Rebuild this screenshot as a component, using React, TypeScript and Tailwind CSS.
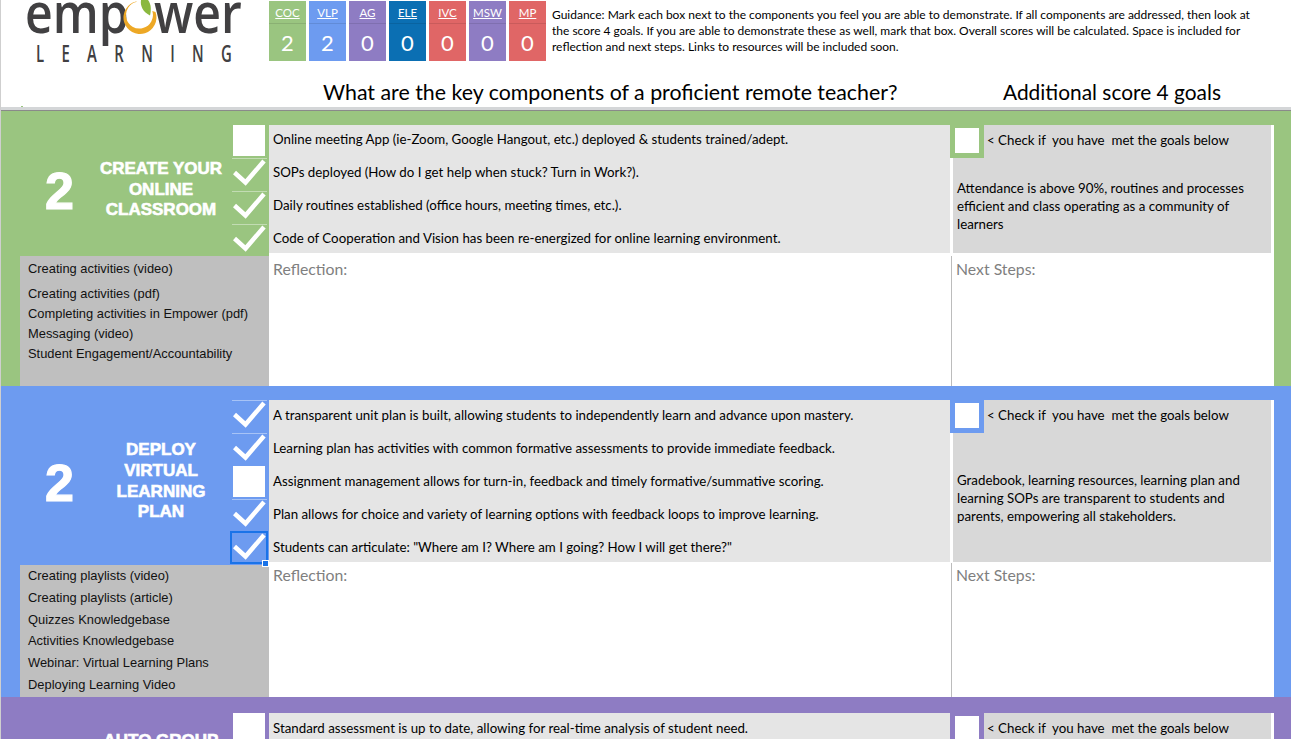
const calibri = "font-['Lato','Open_Sans',sans-serif]"
const arial = "font-['Liberation_Sans',Arial,sans-serif]"

const scores = [
  { label: "COC", value: "2", color: "bg-[#9ac580]" },
  { label: "VLP", value: "2", color: "bg-[#6d9bf0]" },
  { label: "AG", value: "0", color: "bg-[#8e7cc3]" },
  { label: "ELE", value: "0", color: "bg-[#0b6fb3]" },
  { label: "IVC", value: "0", color: "bg-[#e06666]" },
  { label: "MSW", value: "0", color: "bg-[#8e7cc3]" },
  { label: "MP", value: "0", color: "bg-[#e06666]" },
]

interface Item {
  text: string
  checked: boolean
}

interface SectionProps {
  color: string
  titleLines: string[]
  score?: string
  items: Item[]
  goal?: string
  links?: string[]
  linkClass?: string
  linkRowClass?: string
  topPad: string
  topHeight: string
  lowerHeight: string
  reflectPad: string
  nextClass: string
  textOffset: string
  titleClass?: string
  selected?: number
}

function Logo() {
  return (
    <div className="w-[268px] shrink-0 h-[107px] relative overflow-hidden">
      <span className="absolute left-[24px] top-[-25px] origin-left scale-x-[0.86] font-['Open_Sans',sans-serif] font-semibold text-[56px] leading-[72px] text-[#414042]">emp</span>
      <svg className="absolute left-[121px] top-0" width="38" height="40" viewBox="0 0 38 40">
        <path d="M14 1.5 A16.5 16.5 0 1 0 33.5 12 L30.3 11 A13.5 13.5 0 1 1 15 1.8 Z" fill="#eda825" />
        <path d="M19 0 C18 6 21 12 28 15.5 C29.5 9 29 4 26 0 Z" fill="#8ab83f" />
      </svg>
      <span className="absolute left-[153px] top-[-25px] origin-left scale-x-[0.86] font-['Open_Sans',sans-serif] font-semibold text-[56px] leading-[72px] text-[#414042]">wer</span>
      <div className="absolute left-[35px] top-[41px] origin-left scale-x-[0.62] font-['Open_Sans',sans-serif] font-semibold text-[24px] leading-[24px] text-[#414042] tracking-[28px] whitespace-nowrap">LEARNING</div>
      <div className="absolute left-[20px] bottom-0 w-[2px] h-[1px] bg-[#9ac580]" />
    </div>
  )
}

function Check() {
  return (
    <svg width="33" height="30" viewBox="0 0 33 30">
      <path d="M1.5 13.5 L12.5 23.5 L31 2" fill="none" stroke="white" strokeWidth="4.5" />
    </svg>
  )
}

function Section({
  color,
  titleLines,
  score,
  items,
  goal,
  links,
  linkClass,
  linkRowClass,
  topPad,
  topHeight,
  lowerHeight,
  reflectPad,
  nextClass,
  textOffset,
  titleClass,
  selected,
}: SectionProps) {
  return (
    <section className={`flex ${color} ${topPad}`}>
      <div className="w-[268px] shrink-0 flex flex-col">
        <div className="flex">
          <div className={`w-[231px] shrink-0 flex text-white ${titleClass ?? "items-center"}`}>
            <div className={`w-[95px] shrink-0 pl-[44px] text-[52px] leading-[52px] font-bold ${arial} [-webkit-text-stroke:1.2px_white]`}>{score}</div>
            <div className={`w-[130px] -mt-[2px] text-center text-[17px] leading-[20.7px] font-bold ${arial} [-webkit-text-stroke:0.6px_white]`}>
              {titleLines.map((l) => (
                <div key={l}>{l}</div>
              ))}
            </div>
          </div>
          <div className="w-[37px]">
            {items.map((item, i) => (
              <div
                key={item.text}
                className={`relative h-[33px] pl-[1px] ${item.checked ? "border-t border-white/40 mr-[2px]" : ""}`}
              >
                {item.checked ? <Check /> : <div className="w-[32px] h-[31px] bg-white" />}
                {selected === i && (
                  <div className="absolute left-[-2px] top-[-2px] w-[38px] h-[33px] border-2 border-[#1a73e8]">
                    <div className="absolute right-[-3px] bottom-[-5px] w-[7px] h-[7px] bg-[#1a73e8] border border-white" />
                  </div>
                )}
              </div>
            ))}
          </div>
        </div>
        {links && (
          <div className={`ml-[19px] bg-[#bfbfbf] grow text-[12.9px] leading-[18px] text-[#111] pl-[8px] ${arial} ${linkClass}`}>
            {links.map((l, i) => (
              <div key={l} className={linkRowClass ?? (i === 0 ? "h-[25px]" : "h-[20px]")}>
                {l}
              </div>
            ))}
          </div>
        )}
      </div>

      <div className="w-[1005px] shrink-0 flex flex-col bg-white">
        <div className={`flex ${topHeight}`}>
          <div className={`w-[681px] shrink-0 bg-[#e5e5e5] text-[13.3px] text-black ${calibri}`}>
            <div className={textOffset}>
              {items.map((item) => (
                <div key={item.text} className="h-[33px] pl-[4px] flex items-center whitespace-nowrap">
                  {item.text}
                </div>
              ))}
            </div>
          </div>
          <div className="w-[3px] shrink-0" />
          <div className={`w-[318px] shrink-0 bg-[#d8d8d8] flex flex-col text-[13.3px] text-black ${calibri}`}>
            <div className="flex items-start">
              <div className={`-ml-[3px] w-[34px] h-[33px] shrink-0 ${color} flex pl-[5px] pt-[3px]`}>
                <div className="w-[24px] h-[25px] bg-white" />
              </div>
              <div className="pl-[3px] h-[31px] flex items-center whitespace-pre">{"< Check if  you have  met the goals below"}</div>
            </div>
            <div className="grow flex items-center px-[4px] pt-[1px] leading-[18px]">{goal}</div>
          </div>
          <div className="w-[3px] shrink-0" />
        </div>
        <div className={`flex text-[15.8px] text-[#7f7f7f] ${calibri} ${lowerHeight}`}>
          <div className={`w-[682px] shrink-0 pl-[4px] ${reflectPad}`}>Reflection:</div>
          <div className={`grow border-l border-[#bcbcbc] pl-[4px] ${nextClass}`}>Next Steps:</div>
        </div>
      </div>
      <div className="grow" />
    </section>
  )
}

export default function App() {
  return (
    <div className="h-[739px] w-[1291px] overflow-hidden bg-white border-l border-[#cfcfcf]">
      <header className="flex h-[107px]">
        <Logo />
        <div className="flex flex-col grow">
          <div className="flex">
            <div className="flex gap-[3px] pt-[1px]">
              {scores.map((s) => (
                <div key={s.label} className={`w-[37px] h-[60px] ${s.color} text-white text-center ${calibri}`}>
                  <div className="h-[23px] border-b border-black/10 text-[11.5px] leading-[24px] underline">{s.label}</div>
                  <div className="text-[22px] leading-[37px]">{s.value}</div>
                </div>
              ))}
            </div>
            <p className={`ml-[6px] mt-[7px] w-[704px] text-[12px] leading-[16px] text-black ${calibri}`}>
              Guidance: Mark each box next to the components you feel you are able to demonstrate. If all components are addressed, then look at the score 4 goals. If you are able to demonstrate these as well, mark that box. Overall scores will be calculated. Space is included for reflection and next steps. Links to resources will be included soon.
            </p>
          </div>
          <div className={`flex mt-[17px] leading-[28px] text-black whitespace-nowrap ${calibri}`}>
            <div className="ml-[54px] w-[680px] shrink-0 text-[21.35px]">What are the key components of a proficient remote teacher?</div>
            <div className="text-[20.9px]">Additional score 4 goals</div>
          </div>
        </div>
      </header>
      <div className="h-[4px] bg-[#d4d6d8] border-b border-[#8a8a8a]" />
      <Section
        color="bg-[#9ac580]"
        topPad="pt-[14px]"
        topHeight="h-[128px]"
        lowerHeight="h-[133px]"
        reflectPad="pt-[4px]"
        nextClass="mt-[3px] pt-[1px]"
        textOffset="-mt-[2px]"
        titleLines={["CREATE YOUR", "ONLINE", "CLASSROOM"]}
        score="2"
        items={[
          { text: "Online meeting App (ie-Zoom, Google Hangout, etc.) deployed & students trained/adept.", checked: false },
          { text: "SOPs deployed (How do I get help when stuck? Turn in Work?).", checked: true },
          { text: "Daily routines established (office hours, meeting times, etc.).", checked: true },
          { text: "Code of Cooperation and Vision has been re-energized for online learning environment.", checked: true },
        ]}
        goal="Attendance is above 90%, routines and processes efficient and class operating as a community of learners"
        links={["Creating activities (video)", "Creating activities (pdf)", "Completing activities in Empower (pdf)", "Messaging (video)", "Student Engagement/Accountability"]}
        linkClass="-mt-[1px] pt-[4px]"
      />
      <Section
        color="bg-[#6d9bf0]"
        topPad="pt-[14px]"
        topHeight="h-[162px]"
        lowerHeight="h-[135px]"
        reflectPad="pt-[1px]"
        nextClass="mt-[1px]"
        textOffset="-mt-[1px]"
        titleLines={["DEPLOY", "VIRTUAL", "LEARNING", "PLAN"]}
        score="2"
        items={[
          { text: "A transparent unit plan is built, allowing students to independently learn and advance upon mastery.", checked: true },
          { text: "Learning plan has activities with common formative assessments to provide immediate feedback.", checked: true },
          { text: "Assignment management allows for turn-in, feedback and timely formative/summative scoring.", checked: false },
          { text: "Plan allows for choice and variety of learning options with feedback loops to improve learning.", checked: true },
          { text: 'Students can articulate: "Where am I? Where am I going? How I will get there?"', checked: true },
        ]}
        selected={4}
        goal="Gradebook, learning resources, learning plan and learning SOPs are transparent to students and parents, empowering all stakeholders."
        links={["Creating playlists (video)", "Creating playlists (article)", "Quizzes Knowledgebase", "Activities Knowledgebase", "Webinar: Virtual Learning Plans", "Deploying Learning Video"]}
        linkClass="flex flex-col gap-[3.8px] pt-[2px]"
        linkRowClass="h-[18px]"
      />
      <Section
        color="bg-[#8e7cc3]"
        topPad="pt-[16px]"
        topHeight="h-[60px]"
        lowerHeight="h-[60px]"
        reflectPad="pt-[1px]"
        nextClass="mt-[1px]"
        textOffset="-mt-[1px]"
        titleClass="items-start pt-[20px]"
        titleLines={["AUTO GROUP"]}
        items={[{ text: "Standard assessment is up to date, allowing for real-time analysis of student need.", checked: false }]}
      />
    </div>
  )
}
